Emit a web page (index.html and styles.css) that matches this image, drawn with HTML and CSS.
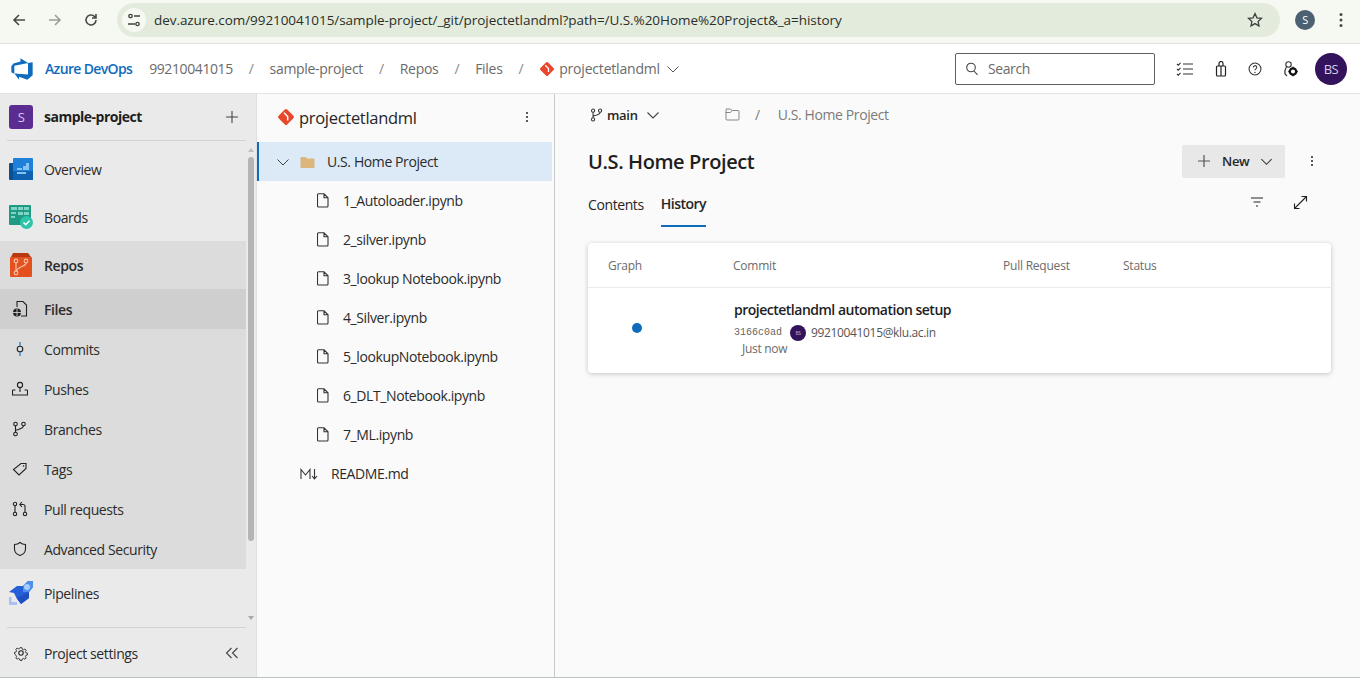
FILE: index.html
```html
<!DOCTYPE html>
<html lang="en">
<head>
  <meta charset="UTF-8">
  <title>Files - Repos</title>
  <link rel="stylesheet" href="styles.css">
</head>
<body>

  <!-- browser chrome -->
  <div class="chrome">
    <svg class="chrome-btn" viewBox="0 0 16 16"><path d="M14 8H3M8 3L3 8l5 5" fill="none" stroke="#474b45" stroke-width="1.6"/></svg>
    <svg class="chrome-btn" viewBox="0 0 16 16"><path d="M2 8h11M8 3l5 5-5 5" fill="none" stroke="#9a9e97" stroke-width="1.6"/></svg>
    <svg class="chrome-btn" viewBox="0 0 16 16"><path d="M13 8a5 5 0 1 1-1.600-3.700L13 6M13 2v4H9" fill="none" stroke="#474b45" stroke-width="1.6"/></svg>
    <div class="url-pill">
      <span class="url-tune">
        <svg width="14" height="14" viewBox="0 0 14 14"><g fill="none" stroke="#3f433d" stroke-width="1.3"><circle cx="3.500" cy="3" r="1.700"/><circle cx="10.500" cy="11" r="1.700"/><path d="M7 3h6M1 11h7"/></g></svg>
      </span>
      <span class="url-text">dev.azure.com/99210041015/sample-project/_git/projectetlandml?path=/U.S.%20Home%20Project&amp;_a=history</span>
      <svg class="url-star" width="16" height="16" viewBox="0 0 16 16"><path d="M8 1.600l1.900 4.200 4.600.5-3.400 3.100.9 4.500L8 11.600l-4 2.300.9-4.500L1.500 6.300l4.600-.5z" fill="none" stroke="#3f433d" stroke-width="1.3"/></svg>
    </div>
    <span class="chrome-avatar">S</span>
    <svg class="chrome-menu" width="4" height="16" viewBox="0 0 4 16"><g fill="#474b45"><circle cx="2" cy="2.500" r="1.500"/><circle cx="2" cy="8" r="1.500"/><circle cx="2" cy="13.500" r="1.500"/></g></svg>
  </div>

  <!-- azure devops top bar -->
  <header class="topbar">
    <svg class="logo" width="24" height="24" viewBox="0 0 18 18"><path fill="#0f6cbd" d="M17 4v9.740l-4 3.280-6.200-2.260V17l-3.510-4.590 10.230.8V4.440zM13.590 4.490L7.850 1v2.290L2.580 4.840 1 6.870v4.610l2.260 1V6.570z"/></svg>
    <span class="brand">Azure DevOps</span>
    <span class="crumb crumb-org">99210041015</span>
    <span class="crumb-sep">/</span>
    <span class="crumb">sample-project</span>
    <span class="crumb-sep">/</span>
    <span class="crumb">Repos</span>
    <span class="crumb-sep">/</span>
    <span class="crumb">Files</span>
    <span class="crumb-sep">/</span>
    <svg class="git-icon" width="16" height="16" viewBox="0 0 16 16"><rect x="2.600" y="2.600" width="10.800" height="10.800" rx="1.500" fill="#e8472b" transform="rotate(45 8 8)"/><path d="M6.200 4.200l3.300 3.300v3.500M9.500 7.500v1" stroke="#fff" stroke-width="1.300" fill="none"/></svg>
    <span class="crumb crumb-repo">projectetlandml</span>
    <svg class="chev" width="14" height="14" viewBox="0 0 14 14"><path d="M1.500 4.500L7 10l5.500-5.500" fill="none" stroke="#555" stroke-width="1"/></svg>
    <div class="search">
      <svg width="14" height="14" viewBox="0 0 14 14"><g fill="none" stroke="#444" stroke-width="1.100"><circle cx="6" cy="5.500" r="4.300"/><path d="M9 9l3.500 3.800"/></g></svg>
      <span>Search</span>
    </div>
    <div class="top-icons">
      <svg width="18" height="16" viewBox="0 0 18 16"><g fill="none" stroke="#333" stroke-width="1.100"><path d="M7 3h10M7 8h10M7 13h10M1 3l1.300 1.300L4.500 1.800M1 8l1.300 1.300 2.200-2.500M1 13l1.300 1.300 2.200-2.500"/></g></svg>
      <svg width="12" height="16" viewBox="0 0 12 16"><g fill="none" stroke="#222" stroke-width="1.200"><rect x="1.500" y="5" width="9" height="10" rx="1"/><path d="M4 5V2.500a2 2 0 0 1 4 0V5M6 5v10"/></g></svg>
      <svg width="14" height="14" viewBox="0 0 16 16"><circle cx="8" cy="8" r="6.800" fill="none" stroke="#333" stroke-width="1.200"/><path d="M6 6.200a2 2 0 1 1 3 1.700c-.7.400-1 .7-1 1.600" fill="none" stroke="#333" stroke-width="1.200"/><circle cx="8" cy="12" r=".8" fill="#333"/></svg>
      <svg width="15" height="16" viewBox="0 0 15 16"><g fill="none" stroke="#333" stroke-width="1.100"><circle cx="5.500" cy="3.500" r="2.700"/><path d="M3.500 6C2 8 1.500 10.500 2 13l2 2"/></g><circle cx="10" cy="10.500" r="3.200" fill="none" stroke="#111" stroke-width="2.200"/><path d="M10 5.800v1.400M10 13.800v1.400M5.300 10.500h1.400M13.300 10.500h1.400" stroke="#111" stroke-width="1.400"/></svg>
    </div>
    <span class="user-avatar">BS</span>
  </header>

  <div class="workspace">
    <!-- left nav -->
    <aside class="sidebar">
      <div class="project-row">
        <span class="project-badge">S</span>
        <span class="project-name">sample-project</span>
        <svg width="14" height="14" viewBox="0 0 14 14"><path d="M7 1v12M1 7h12" stroke="#444" stroke-width="1.100"/></svg>
      </div>
      <nav class="nav">
        <a class="nav-main">
          <svg width="24" height="24" viewBox="0 0 24 24"><rect y="6" width="10" height="17" rx="1" fill="#0b4f94"/><rect x="4" y="1" width="20" height="22" rx="1" fill="#1e80d8"/><path d="M4 14h20v9H5a1 1 0 0 1-1-1z" fill="#0f62b0"/><path d="M14 9h3V6h3v7h-6zM8 11h5v2H8zM8 15h9v2H8z" fill="#84c3f3"/></svg>
          Overview
        </a>
        <a class="nav-main">
          <svg width="24" height="24" viewBox="0 0 24 24"><rect y="0" width="22" height="20" rx="1" fill="#1f9b85"/><path d="M2 2h6v3H2zM9 2h5v3H9zM15 2h5v3h-5zM2 7h5v2H2zM2 11h4v2H2zM9 7h5v3H9zM15 7h5v3h-5z" fill="#7fd4c4"/><circle cx="17.500" cy="17.500" r="6.500" fill="#2cc5a9"/><path d="M14.500 17.500l2.200 2.200 3.800-4" fill="none" stroke="#fff" stroke-width="1.600"/></svg>
          Boards
        </a>
        <div class="nav-group">
          <a class="nav-main nav-strong">
            <svg width="24" height="24" viewBox="0 0 24 24"><path d="M4 0h15l3 4v3H2V4z" fill="#b93a10"/><rect x="1" y="4" width="22" height="20" rx="1" fill="#e2511e"/><g fill="none" stroke="#f7c0a6" stroke-width="1.200"><circle cx="7" cy="20" r="1.800"/><circle cx="7" cy="8" r="1.800"/><circle cx="17" cy="8" r="1.800"/><path d="M7 10v8M17 10c0 4-8 3-9.500 8"/></g></svg>
            Repos
          </a>
          <a class="nav-sub nav-selected">
            <svg width="16" height="18" viewBox="0 0 16 18"><path d="M5 7V1.500h6l3.500 3.500v11H9" fill="none" stroke="#222" stroke-width="1.100"/><circle cx="5" cy="12.500" r="4" fill="#222"/><path d="M1 12.500h8M5 9v7" stroke="#cfcfcf" stroke-width=".9"/></svg>
            <span>Files</span>
          </a>
          <a class="nav-sub">
            <svg width="16" height="16" viewBox="0 0 16 16"><circle cx="8" cy="8" r="2.800" fill="none" stroke="#222" stroke-width="1.100"/><path d="M8 1v4.200M8 10.800V15" stroke="#0f6cbd" stroke-width="1.100"/></svg>
            <span>Commits</span>
          </a>
          <a class="nav-sub">
            <svg width="16" height="16" viewBox="0 0 16 16"><g fill="none" stroke="#222" stroke-width="1.100"><circle cx="8" cy="4" r="2.600"/><path d="M8 6.600V11M.5 9v5h15V9M.5 9h3M15.500 9h-3"/></g></svg>
            <span>Pushes</span>
          </a>
          <a class="nav-sub">
            <svg width="16" height="16" viewBox="0 0 16 16"><g fill="none" stroke="#222" stroke-width="1.100"><circle cx="3.500" cy="3" r="1.800"/><circle cx="11.500" cy="3" r="1.800"/><circle cx="3.500" cy="13" r="1.800"/><path d="M3.500 4.800v6.400M11.500 4.800c0 3-5 3.500-7.800 4.500"/></g></svg>
            <span>Branches</span>
          </a>
          <a class="nav-sub">
            <svg width="16" height="16" viewBox="0 0 16 16"><path d="M9 2.500h5v5l-7 6.500-5.500-5.500z" fill="none" stroke="#222" stroke-width="1.100"/><circle cx="11.500" cy="5" r=".8" fill="#222"/></svg>
            <span>Tags</span>
          </a>
          <a class="nav-sub">
            <svg width="16" height="16" viewBox="0 0 16 16"><g fill="none" stroke="#222" stroke-width="1.100"><circle cx="3" cy="3" r="1.700"/><circle cx="3" cy="13" r="1.700"/><circle cx="13" cy="13" r="1.700"/><path d="M3 4.700v6.600M13 11.300V5.500a2 2 0 0 0-2-2H8M10 1L7.800 3.500 10 6"/></g></svg>
            <span>Pull requests</span>
          </a>
          <a class="nav-sub">
            <svg width="16" height="16" viewBox="0 0 16 16"><path d="M8 1.500c1.500 1.300 3.300 2 5.500 2v4.500c0 3.300-2.200 5.400-5.500 6.500C4.700 13.400 2.500 11.300 2.500 8V3.500c2.200 0 4-.7 5.500-2z" fill="none" stroke="#222" stroke-width="1.100"/></svg>
            <span>Advanced Security</span>
          </a>
        </div>
        <a class="nav-main">
          <svg width="24" height="24" viewBox="0 0 24 24"><path d="M0 11l8-6h6l5-5h5v6l-4 5v6l-8 6-4-5-3-6z" fill="#2560d8"/><path d="M14 5l5-5h5v6l-4 5H14z" fill="#4f8fea"/><circle cx="18" cy="6" r="3" fill="#a9cdf7"/><path d="M8 17l12-6v6l-8 6z" fill="#1d4fc0"/><path d="M0 16h2.500v5H8v3H0z" fill="#a9c0f2"/></svg>
          Pipelines
        </a>
      </nav>
      <div class="sidebar-foot">
        <svg width="16" height="16" viewBox="0 0 16 16"><g fill="none" stroke="#222" stroke-width="1.100"><circle cx="8" cy="8" r="2.200"/><path d="M6.800 1.500h2.400l.4 1.900 1.600.7 1.700-1 1.600 1.700-1 1.600.7 1.600 1.800.4v2.200l-1.800.4-.7 1.600 1 1.700-1.600 1.600-1.700-1-1.600.7-.4 1.800H6.800l-.4-1.800-1.600-.7-1.700 1-1.600-1.600 1-1.700-.7-1.600L0 9.400V7.200l1.800-.4.700-1.600-1-1.600 1.600-1.700 1.700 1 1.600-.7z" transform="translate(1.600 1.500) scale(.8)"/></g></svg>
        <span>Project settings</span>
        <svg width="14" height="12" viewBox="0 0 14 12"><path d="M6.500 1L1.500 6l5 5M12.500 1l-5 5 5 5" fill="none" stroke="#444" stroke-width="1.100"/></svg>
      </div>
      <div class="scroll-up"></div>
      <div class="scroll-thumb"></div>
      <div class="scroll-down"></div>
    </aside>

    <!-- file tree -->
    <section class="tree">
      <div class="tree-head">
        <svg width="18" height="18" viewBox="0 0 16 16"><rect x="2.600" y="2.600" width="10.800" height="10.800" rx="1.500" fill="#e8472b" transform="rotate(45 8 8)"/><path d="M6.200 4.200l3.300 3.300v3.500M9.500 7.500v1" stroke="#fff" stroke-width="1.300" fill="none"/></svg>
        <span class="tree-title">projectetlandml</span>
        <svg class="dots" width="4" height="12" viewBox="0 0 4 12"><g fill="#333"><circle cx="2" cy="2" r="1.100"/><circle cx="2" cy="6" r="1.100"/><circle cx="2" cy="10" r="1.100"/></g></svg>
      </div>
      <div class="tree-row tree-folder">
        <svg width="12" height="12" viewBox="0 0 12 12"><path d="M.5 3.500L6 9l5.500-5.500" fill="none" stroke="#444" stroke-width="1"/></svg>
        <svg width="15" height="12" viewBox="0 0 15 12"><path d="M1.500 1h4l1.500 1.500h6.500a1 1 0 0 1 1 1V11a1 1 0 0 1-1 1h-12a1 1 0 0 1-1-1V2a1 1 0 0 1 1-1z" fill="#dcb67a"/></svg>
        <span>U.S. Home Project</span>
      </div>
      <div class="tree-row tree-file"><svg width="12" height="15" viewBox="0 0 12 15"><path d="M1.500.8h5.500l4 4v8.200a1 1 0 0 1-1 1H1.500a1 1 0 0 1-1-1V1.800a1 1 0 0 1 1-1zM7 .8v4h4" fill="none" stroke="#333" stroke-width="1.100"/></svg><span>1_Autoloader.ipynb</span></div>
      <div class="tree-row tree-file"><svg width="12" height="15" viewBox="0 0 12 15"><path d="M1.500.8h5.500l4 4v8.200a1 1 0 0 1-1 1H1.500a1 1 0 0 1-1-1V1.800a1 1 0 0 1 1-1zM7 .8v4h4" fill="none" stroke="#333" stroke-width="1.100"/></svg><span>2_silver.ipynb</span></div>
      <div class="tree-row tree-file"><svg width="12" height="15" viewBox="0 0 12 15"><path d="M1.500.8h5.500l4 4v8.200a1 1 0 0 1-1 1H1.500a1 1 0 0 1-1-1V1.800a1 1 0 0 1 1-1zM7 .8v4h4" fill="none" stroke="#333" stroke-width="1.100"/></svg><span>3_lookup Notebook.ipynb</span></div>
      <div class="tree-row tree-file"><svg width="12" height="15" viewBox="0 0 12 15"><path d="M1.500.8h5.500l4 4v8.200a1 1 0 0 1-1 1H1.500a1 1 0 0 1-1-1V1.800a1 1 0 0 1 1-1zM7 .8v4h4" fill="none" stroke="#333" stroke-width="1.100"/></svg><span>4_Silver.ipynb</span></div>
      <div class="tree-row tree-file"><svg width="12" height="15" viewBox="0 0 12 15"><path d="M1.500.8h5.500l4 4v8.200a1 1 0 0 1-1 1H1.500a1 1 0 0 1-1-1V1.800a1 1 0 0 1 1-1zM7 .8v4h4" fill="none" stroke="#333" stroke-width="1.100"/></svg><span>5_lookupNotebook.ipynb</span></div>
      <div class="tree-row tree-file"><svg width="12" height="15" viewBox="0 0 12 15"><path d="M1.500.8h5.500l4 4v8.200a1 1 0 0 1-1 1H1.500a1 1 0 0 1-1-1V1.800a1 1 0 0 1 1-1zM7 .8v4h4" fill="none" stroke="#333" stroke-width="1.100"/></svg><span>6_DLT_Notebook.ipynb</span></div>
      <div class="tree-row tree-file"><svg width="12" height="15" viewBox="0 0 12 15"><path d="M1.500.8h5.500l4 4v8.200a1 1 0 0 1-1 1H1.500a1 1 0 0 1-1-1V1.800a1 1 0 0 1 1-1zM7 .8v4h4" fill="none" stroke="#333" stroke-width="1.100"/></svg><span>7_ML.ipynb</span></div>
      <div class="tree-row tree-md">
        <svg width="18" height="12" viewBox="0 0 18 12"><path d="M1 11V1.500L5.500 7 10 1.500V11M14.500 1v9.500M12 8l2.500 2.800L17 8" fill="none" stroke="#333" stroke-width="1.100"/></svg>
        <span>README.md</span>
      </div>
    </section>

    <!-- main content -->
    <main class="content">
      <div class="branch-row">
        <div class="branch">
          <svg width="14" height="14" viewBox="0 0 16 16"><g fill="none" stroke="#333" stroke-width="1.200"><circle cx="3.500" cy="3" r="1.800"/><circle cx="11.500" cy="3" r="1.800"/><circle cx="3.500" cy="13" r="1.800"/><path d="M3.500 4.800v6.400M11.500 4.800c0 3-5 3.500-7.800 4.500"/></g></svg>
          <span class="branch-name">main</span>
          <svg width="14" height="14" viewBox="0 0 14 14"><path d="M1.500 4.500L7 10l5.500-5.500" fill="none" stroke="#444" stroke-width="1.100"/></svg>
        </div>
        <div class="path">
          <svg width="15" height="13" viewBox="0 0 15 13"><path d="M1.500 1h4l1.500 1.500h6a1 1 0 0 1 1 1V11a1 1 0 0 1-1 1h-11a1 1 0 0 1-1-1V2a1 1 0 0 1 1-1zM.5 4.500h5l1.500-2" fill="none" stroke="#888" stroke-width="1"/></svg>
          <span class="path-sep">/</span>
          <span>U.S. Home Project</span>
        </div>
      </div>

      <div class="title-row">
        <h1>U.S. Home Project</h1>
        <button class="new-btn">
          <svg width="14" height="14" viewBox="0 0 14 14"><path d="M7 1v12M1 7h12" stroke="#555" stroke-width="1.200"/></svg>
          <span>New</span>
          <svg width="13" height="13" viewBox="0 0 14 14"><path d="M1.500 4.500L7 10l5.500-5.500" fill="none" stroke="#333" stroke-width="1.100"/></svg>
        </button>
        <svg class="dots" width="4" height="12" viewBox="0 0 4 12"><g fill="#333"><circle cx="2" cy="2" r="1.100"/><circle cx="2" cy="6" r="1.100"/><circle cx="2" cy="10" r="1.100"/></g></svg>
      </div>

      <div class="tabs">
        <span class="tab">Contents</span>
        <span class="tab tab-active">History</span>
        <div class="tab-tools">
          <svg width="14" height="12" viewBox="0 0 14 12"><path d="M1 2h12M3.500 6h7M6 10h2" stroke="#222" stroke-width="1.100"/></svg>
          <svg width="15" height="15" viewBox="0 0 15 15"><path d="M1.500 13.500l12-12M8.500 1.500h5v5M1.500 8.500v5h5" fill="none" stroke="#222" stroke-width="1.100"/></svg>
        </div>
      </div>

      <div class="card">
        <div class="card-head">
          <span class="col-graph">Graph</span>
          <span class="col-commit">Commit</span>
          <span class="col-pr">Pull Request</span>
          <span>Status</span>
        </div>
        <div class="card-row">
          <div class="col-graph graph-cell"><span class="graph-dot"></span></div>
          <div class="commit">
            <div class="commit-title">projectetlandml automation setup</div>
            <div class="commit-meta">
              <span class="sha">3166c0ad</span>
              <span class="mini-avatar">BS</span>
              <span>99210041015@klu.ac.in</span>
            </div>
            <div class="commit-time">Just now</div>
          </div>
        </div>
      </div>
    </main>
  </div>

</body>
</html>
```

FILE: styles.css
```css
* {
  box-sizing: border-box;
}

html, body {
  height: 100%;
}

body {
  margin: 0;
  height: 678px;
  overflow: hidden;
  display: flex;
  flex-direction: column;
  font-family: "Open Sans", "Noto Sans", sans-serif;
  font-size: 14px;
  letter-spacing: -0.4px;
  color: #262626;
  background-color: #fafafa;
}

/* browser chrome */
.chrome {
  height: 44px;
  flex: none;
  display: flex;
  align-items: center;
  padding: 0 0 4px 11px;
  background-color: #f6f9f2;
  border-bottom: 1px solid #dfe3db;
}

.chrome-btn {
  width: 16px;
  height: 16px;
  margin-right: 20px;
}

.url-pill {
  width: 1163px;
  height: 34px;
  margin-left: -2px;
  display: flex;
  align-items: center;
  padding: 0 17px 0 5px;
  background-color: #e3ebdd;
  border-radius: 17px;
}

.url-tune {
  width: 24px;
  height: 24px;
  border-radius: 50%;
  background-color: #f6f9f2;
  display: flex;
  align-items: center;
  justify-content: center;
}

.url-text {
  margin-left: 8px;
  font-size: 13.5px;
  letter-spacing: -0.06px;
  color: #2b2f29;
}

.url-star {
  margin-left: auto;
}

.chrome-avatar {
  width: 20px;
  height: 20px;
  margin-left: 15px;
  border-radius: 50%;
  background-color: #4b6070;
  color: #fff;
  font-size: 11px;
  display: flex;
  align-items: center;
  justify-content: center;
}

.chrome-menu {
  margin-left: 24px;
}

/* top bar */
.topbar {
  height: 50px;
  flex: none;
  display: flex;
  align-items: center;
  padding: 0 13px 0 10px;
  background-color: #fff;
  border-bottom: 1px solid #e4e4e4;
}

.logo {
  margin-right: 11px;
}

.brand {
  font-weight: 600;
  letter-spacing: -0.65px;
  color: #0f6cbd;
  margin-right: 17px;
}

.crumb {
  letter-spacing: -0.3px;
  color: #6b6b6b;
}

.crumb-org {
  letter-spacing: -0.4px;
}

.crumb-sep {
  color: #8a8a8a;
  margin: 0 16px;
}

.crumb-repo {
  margin-left: 4px;
  letter-spacing: -0.2px;
}

.chev {
  margin-left: 6px;
}

.search {
  width: 200px;
  height: 32px;
  margin-left: auto;
  display: flex;
  align-items: center;
  gap: 9px;
  padding-left: 9px;
  border: 1px solid #5e5e5e;
  border-radius: 2px;
  color: #6b6b6b;
}

.top-icons {
  display: flex;
  align-items: center;
  gap: 21px;
  margin-left: 21px;
}

.user-avatar {
  width: 32px;
  height: 32px;
  margin-left: 17px;
  border-radius: 50%;
  background-color: #33135c;
  color: #d8cbe8;
  font-size: 13px;
  display: flex;
  align-items: center;
  justify-content: center;
}

/* main layout */
.workspace {
  flex: 1;
  min-height: 0;
  display: flex;
  border-bottom: 1px solid #b8c4bd;
}

/* left nav */
.sidebar {
  width: 257px;
  flex: none;
  position: relative;
  display: flex;
  flex-direction: column;
  background-color: #eaeaea;
  border-right: 1px solid #e0e0e0;
}

.project-row {
  width: 246px;
  height: 47px;
  display: flex;
  align-items: center;
  padding: 0 7px 2px 9px;
  position: relative;
}

.project-row::after {
  content: "";
  position: absolute;
  left: 7px;
  right: 0;
  bottom: 0;
  border-bottom: 1px solid #d2d2d2;
}

.project-badge {
  width: 24px;
  height: 24px;
  border-radius: 3px;
  background-color: #5c2d91;
  color: #d9c9ec;
  display: flex;
  align-items: center;
  justify-content: center;
  font-size: 13px;
}

.project-name {
  flex: 1;
  margin-left: 11px;
  font-weight: 700;
  letter-spacing: -0.5px;
  color: #1e1e1e;
}

.nav {
  width: 246px;
  padding-top: 4px;
}

.nav a {
  display: flex;
  align-items: center;
  padding-top: 1px;
  color: #2b2b2b;
}

.nav a svg {
  margin-bottom: 1px;
}

.nav-main {
  height: 48px;
  gap: 11px;
  padding-left: 9px;
}

.nav-group {
  background-color: #dcdcdc;
}

.nav-strong {
  font-weight: 600;
}

.nav-sub {
  height: 40px;
  gap: 16px;
  padding-left: 12px;
}

.nav-selected {
  background-color: #cfcfcf;
  font-weight: 600;
}

.sidebar-foot {
  width: 246px;
  margin: auto 0 0 0;
  height: 50px;
  display: flex;
  align-items: center;
  gap: 15px;
  padding: 2px 7px 0 13px;
  position: relative;
  color: #2b2b2b;
}

.sidebar-foot::before {
  content: "";
  position: absolute;
  left: 7px;
  right: 0;
  top: 0;
  border-top: 1px solid #d2d2d2;
}

.sidebar-foot span {
  flex: 1;
}

.scroll-thumb {
  position: absolute;
  left: 248px;
  top: 63px;
  width: 6px;
  height: 384px;
  border-radius: 3px;
  background-color: #b4b4b4;
}

.scroll-up,
.scroll-down {
  position: absolute;
  left: 248px;
  width: 0;
  height: 0;
  border-left: 3px solid transparent;
  border-right: 3px solid transparent;
}

.scroll-up {
  top: 54px;
  border-bottom: 4px solid #bdbdbd;
}

.scroll-down {
  top: 522px;
  border-top: 4px solid #a8a8a8;
}

/* file tree */
.tree {
  width: 298px;
  flex: none;
  background-color: #fafafa;
  border-right: 1px solid #c9c9c9;
}

.tree-head {
  height: 48px;
  display: flex;
  align-items: center;
  padding: 0 23px 2px 20px;
  width: 295px;
}

.tree-title {
  flex: 1;
  margin-left: 4px;
  font-size: 16.5px;
  letter-spacing: -0.3px;
  color: #262626;
}

.tree-row {
  width: 295px;
  height: 39px;
  display: flex;
  align-items: center;
  color: #2b2b2b;
}

.tree-folder {
  gap: 12px;
  padding-left: 18px;
  background-color: #dceaf7;
  border-left: 2px solid #0f6cbd;
}

.tree-folder svg:first-child {
  margin-right: -1px;
}

.tree-file {
  gap: 14px;
  padding-left: 60px;
}

.tree-md {
  gap: 13px;
  padding-left: 43px;
}

/* main content */
.content {
  flex: 1;
  min-width: 0;
  padding: 0 29px 0 33px;
}

.branch-row {
  height: 42px;
  display: flex;
  align-items: center;
}

.branch {
  width: 137px;
  display: flex;
  align-items: center;
  gap: 3px;
  padding-left: 2px;
}

.branch-name {
  font-size: 13px;
  font-weight: 600;
  letter-spacing: -0.3px;
  margin-right: 5px;
}

.path {
  display: flex;
  align-items: center;
  padding-bottom: 2px;
  color: #7a7a7a;
}

.path-sep {
  margin: 0 18px 0 15px;
}

.title-row {
  height: 46px;
  padding-top: 4px;
  display: flex;
  align-items: center;
}

h1 {
  flex: 1;
  margin: 0;
  font-size: 20px;
  font-weight: 600;
  letter-spacing: -0.4px;
  color: #1e1e1e;
}

.new-btn {
  width: 103px;
  height: 33px;
  margin: 0 25px 0 0;
  display: flex;
  align-items: center;
  gap: 11px;
  padding: 0 0 0 15px;
  border: 0;
  border-radius: 2px;
  background-color: #e8e8e8;
  font: inherit;
  font-size: 13px;
  font-weight: 600;
  letter-spacing: -0.3px;
  color: #262626;
}

.title-row .dots {
  margin-right: 17px;
}

.tabs {
  height: 45px;
  display: flex;
  align-items: stretch;
  gap: 17px;
}

.tab {
  display: flex;
  align-items: center;
}

.tab-active {
  font-weight: 600;
  letter-spacing: -0.5px;
  border-bottom: 2px solid #0f6cbd;
}

.tab-tools {
  margin-left: auto;
  display: flex;
  align-items: center;
  gap: 29px;
  padding-right: 23px;
  padding-bottom: 5px;
}

.card {
  margin-top: 16px;
  height: 130px;
  background-color: #fff;
  border-radius: 4px;
  box-shadow: 0 1px 5px rgba(0, 0, 0, 0.22);
}

.card-head {
  height: 45px;
  padding-top: 1px;
  display: flex;
  align-items: center;
  font-size: 12px;
  letter-spacing: -0.22px;
  color: #6b6b6b;
  border-bottom: 1px solid #ebebeb;
}

.col-graph {
  width: 145px;
  padding-left: 20px;
  flex: none;
}

.col-commit {
  width: 270px;
  flex: none;
}

.col-pr {
  width: 120px;
  flex: none;
}

.card-row {
  display: flex;
}

.graph-cell {
  padding: 35px 0 0 44px;
}

.graph-dot {
  display: block;
  width: 10px;
  height: 10px;
  border-radius: 50%;
  background-color: #0f6cbd;
}

.commit {
  padding: 13px 0 0 1px;
}

.commit-title {
  font-weight: 600;
  letter-spacing: -0.5px;
  color: #1e1e1e;
  line-height: 18px;
}

.commit-meta {
  display: flex;
  align-items: center;
  gap: 5px;
  margin-top: 6px;
  font-size: 12px;
  letter-spacing: -0.35px;
  color: #555;
  line-height: 16px;
}

.sha {
  font-family: "Liberation Mono", monospace;
  font-size: 10px;
  letter-spacing: 0;
  color: #666;
  margin-right: 3px;
}

.mini-avatar {
  width: 16px;
  height: 16px;
  border-radius: 50%;
  background-color: #33135c;
  color: #b9a8d0;
  font-size: 5px;
  display: flex;
  align-items: center;
  justify-content: center;
}

.commit-time {
  margin: 0 0 0 8px;
  font-size: 12px;
  letter-spacing: -0.3px;
  color: #6b6b6b;
  line-height: 16px;
}
```
